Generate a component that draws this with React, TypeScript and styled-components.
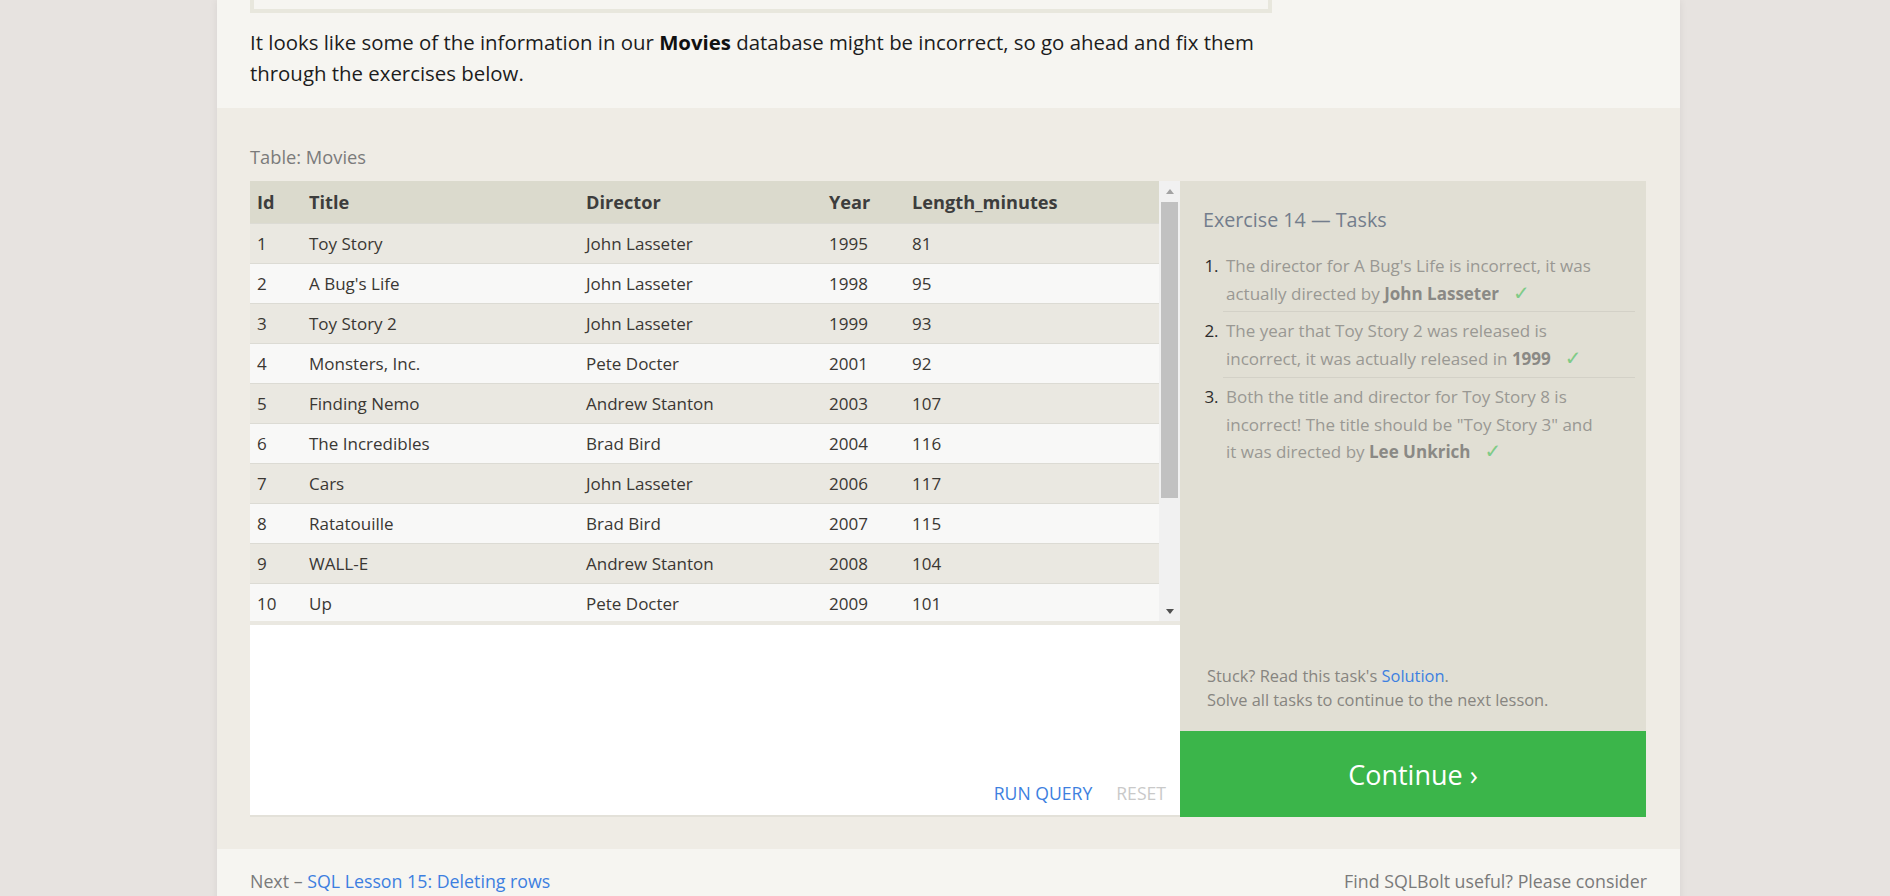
import React from "react";
import styled, { createGlobalStyle } from "styled-components";

const GlobalStyle = createGlobalStyle`
  html, body { margin: 0; padding: 0; }
  body {
    background: #e7e3e0;
    font-family: "Open Sans", "Noto Sans", sans-serif;
    color: #222;
    overflow: hidden;
  }
  * { box-sizing: border-box; }
`;

const Page = styled.div`
  width: 1463px;
  margin-left: 217px;
  min-height: 896px;
  background: #f6f5f1;
  box-shadow: 0 0 8px rgba(0, 0, 0, 0.07);
`;

const TopSection = styled.section`
  background: #f6f5f1;
  padding: 0 33px 19px;
`;

const FigureEdge = styled.div`
  width: 1022px;
  height: 13px;
  border: 4px solid #e8e7dd;
  border-top: none;
`;

const Intro = styled.p`
  margin: 14px 0 0;
  font-size: 20.4px;
  line-height: 31px;
  color: #1c1c1c;
  max-width: 1024px;
  b { font-weight: 700; color: #111; }
`;

const ExerciseSection = styled.section`
  background: #efece5;
  padding: 37px 33px 32px;
`;

const TableLabel = styled.div`
  font-size: 18.3px;
  line-height: 24px;
  color: #7b7b7b;
  margin-bottom: 12px;
`;

const Workspace = styled.div`
  display: flex;
  height: 636px;
`;

const LeftPane = styled.div`
  width: 930px;
  display: flex;
  flex-direction: column;
  border-bottom: 2px solid #e3e1d9;
`;

const TableWrap = styled.div`
  display: flex;
  height: 444px;
  border-bottom: 4px solid #eae8e1;
`;

const TableViewport = styled.div`
  flex: 1;
  overflow: hidden;
`;

const Table = styled.table`
  width: 100%;
  border-collapse: collapse;
  table-layout: fixed;
  font-size: 17px;
`;

const HeadCell = styled.th`
  height: 42px;
  padding: 0 7px;
  text-align: left;
  font-weight: 700;
  font-size: 18.2px;
  color: #3d3d3d;
  background: #dbdacd;
`;

const Row = styled.tr<{ $odd: boolean }>`
  background: ${(p) => (p.$odd ? "#eae8e1" : "#f8f8f7")};
  border-top: 1px solid #dcdbd4;
`;

const Cell = styled.td`
  height: 40px;
  padding: 0 7px;
  color: #3a3733;
  white-space: nowrap;
  overflow: hidden;
`;

const ScrollTrack = styled.div`
  width: 21px;
  background: #f1f1f1;
  display: flex;
  flex-direction: column;
  align-items: center;
`;

const ArrowBox = styled.div`
  height: 20px;
  width: 100%;
  display: flex;
  align-items: center;
  justify-content: center;
`;

const Arrow = styled.div<{ $down?: boolean; $color: string }>`
  width: 0;
  height: 0;
  border-left: 4px solid transparent;
  border-right: 4px solid transparent;
  ${(p) =>
    p.$down
      ? `border-top: 5px solid ${p.$color};`
      : `border-bottom: 5px solid ${p.$color};`}
`;

const Thumb = styled.div`
  width: 17px;
  height: 296px;
  margin-top: 1px;
  background: #c1c1c1;
`;

const TrackSpacer = styled.div`
  flex: 1;
`;

const Editor = styled.div`
  flex: 1;
  background: #ffffff;
  display: flex;
  justify-content: flex-end;
  align-items: flex-end;
  gap: 24px;
  padding: 0 14px 10px 0;
`;

const EditorButton = styled.span<{ $disabled?: boolean }>`
  font-size: 17.6px;
  line-height: 24px;
  color: ${(p) => (p.$disabled ? "#c9c9c9" : "#3d7fe0")};
`;

const TasksPanel = styled.div`
  width: 466px;
  background: #e1dfd4;
  display: flex;
  flex-direction: column;
`;

const TasksBody = styled.div`
  flex: 1;
  padding: 26px 11px 0 23px;
`;

const TasksTitle = styled.div`
  font-size: 19.7px;
  line-height: 26px;
  color: #737d8c;
`;

const TaskList = styled.ol`
  margin: 13px 0 0;
  padding: 0 0 0 20px;
  font-size: 17px;
  line-height: 27.7px;
  color: #999893;
`;

const TaskItem = styled.li`
  padding: 6px 0 4px 3px;
  & + & { border-top: 1px solid #d3d1c7; padding-top: 5px; }
  &::marker { color: #2c2c2c; }
  b { color: #8a8985; font-weight: 700; }
`;

const Check = styled.span`
  color: #7fcb87;
  margin-left: 14px;
  font-family: "DejaVu Sans", sans-serif;
  font-size: 20px;
`;

const Stuck = styled.div`
  padding: 0 20px 19px 27px;
  font-size: 16.4px;
  line-height: 24px;
  color: #878580;
`;

const Link = styled.a`
  color: #3d7fe0;
  text-decoration: none;
`;

const ContinueButton = styled.div`
  height: 86px;
  background: #3bb54a;
  color: #ffffff;
  font-size: 27px;
  display: flex;
  align-items: center;
  justify-content: center;
`;

const Footer = styled.footer`
  background: #f6f5f1;
  padding: 20px 33px 30px;
  display: flex;
  justify-content: space-between;
  font-size: 17.8px;
  line-height: 24px;
  color: #7a7a7a;
`;

const movies: [number, string, string, number, number][] = [
  [1, "Toy Story", "John Lasseter", 1995, 81],
  [2, "A Bug's Life", "John Lasseter", 1998, 95],
  [3, "Toy Story 2", "John Lasseter", 1999, 93],
  [4, "Monsters, Inc.", "Pete Docter", 2001, 92],
  [5, "Finding Nemo", "Andrew Stanton", 2003, 107],
  [6, "The Incredibles", "Brad Bird", 2004, 116],
  [7, "Cars", "John Lasseter", 2006, 117],
  [8, "Ratatouille", "Brad Bird", 2007, 115],
  [9, "WALL-E", "Andrew Stanton", 2008, 104],
  [10, "Up", "Pete Docter", 2009, 101],
  [11, "Toy Story 3", "Lee Unkrich", 2010, 103],
  [12, "Cars 2", "John Lasseter", 2011, 120],
  [13, "Brave", "Brenda Chapman", 2012, 102],
  [14, "Monsters University", "Dan Scanlon", 2013, 110],
];

export default function App() {
  return (
    <>
      <GlobalStyle />
      <Page>
        <TopSection>
          <FigureEdge />
          <Intro>
            It looks like some of the information in our <b>Movies</b> database might be
            incorrect, so go ahead and fix them through the exercises below.
          </Intro>
        </TopSection>

        <ExerciseSection>
          <TableLabel>Table: Movies</TableLabel>
          <Workspace>
            <LeftPane>
              <TableWrap>
                <TableViewport>
                  <Table>
                    <colgroup>
                      <col style={{ width: 52 }} />
                      <col style={{ width: 277 }} />
                      <col style={{ width: 243 }} />
                      <col style={{ width: 83 }} />
                      <col />
                    </colgroup>
                    <thead>
                      <tr>
                        <HeadCell>Id</HeadCell>
                        <HeadCell>Title</HeadCell>
                        <HeadCell>Director</HeadCell>
                        <HeadCell>Year</HeadCell>
                        <HeadCell>Length_minutes</HeadCell>
                      </tr>
                    </thead>
                    <tbody>
                      {movies.map((m, i) => (
                        <Row key={m[0]} $odd={i % 2 === 0}>
                          <Cell>{m[0]}</Cell>
                          <Cell>{m[1]}</Cell>
                          <Cell>{m[2]}</Cell>
                          <Cell>{m[3]}</Cell>
                          <Cell>{m[4]}</Cell>
                        </Row>
                      ))}
                    </tbody>
                  </Table>
                </TableViewport>
                <ScrollTrack>
                  <ArrowBox>
                    <Arrow $color="#a3a3a3" />
                  </ArrowBox>
                  <Thumb />
                  <TrackSpacer />
                  <ArrowBox>
                    <Arrow $down $color="#505050" />
                  </ArrowBox>
                </ScrollTrack>
              </TableWrap>
              <Editor>
                <EditorButton>RUN QUERY</EditorButton>
                <EditorButton $disabled>RESET</EditorButton>
              </Editor>
            </LeftPane>

            <TasksPanel>
              <TasksBody>
                <TasksTitle>Exercise 14 — Tasks</TasksTitle>
                <TaskList>
                  <TaskItem>
                    The director for A Bug's Life is incorrect, it was actually directed by{" "}
                    <b>John Lasseter</b>
                    <Check>✓</Check>
                  </TaskItem>
                  <TaskItem>
                    The year that Toy Story 2 was released is
                    <br />
                    incorrect, it was actually released in <b>1999</b>
                    <Check>✓</Check>
                  </TaskItem>
                  <TaskItem>
                    Both the title and director for Toy Story 8 is
                    <br />
                    incorrect! The title should be "Toy Story 3" and
                    <br />
                    it was directed by <b>Lee Unkrich</b>
                    <Check>✓</Check>
                  </TaskItem>
                </TaskList>
              </TasksBody>
              <Stuck>
                Stuck? Read this task's <Link href="#">Solution</Link>.
                <br />
                Solve all tasks to continue to the next lesson.
              </Stuck>
              <ContinueButton>Continue ›</ContinueButton>
            </TasksPanel>
          </Workspace>
        </ExerciseSection>

        <Footer>
          <span>
            Next – <Link href="#">SQL Lesson 15: Deleting rows</Link>
          </span>
          <span>Find SQLBolt useful? Please consider</span>
        </Footer>
      </Page>
    </>
  );
}
